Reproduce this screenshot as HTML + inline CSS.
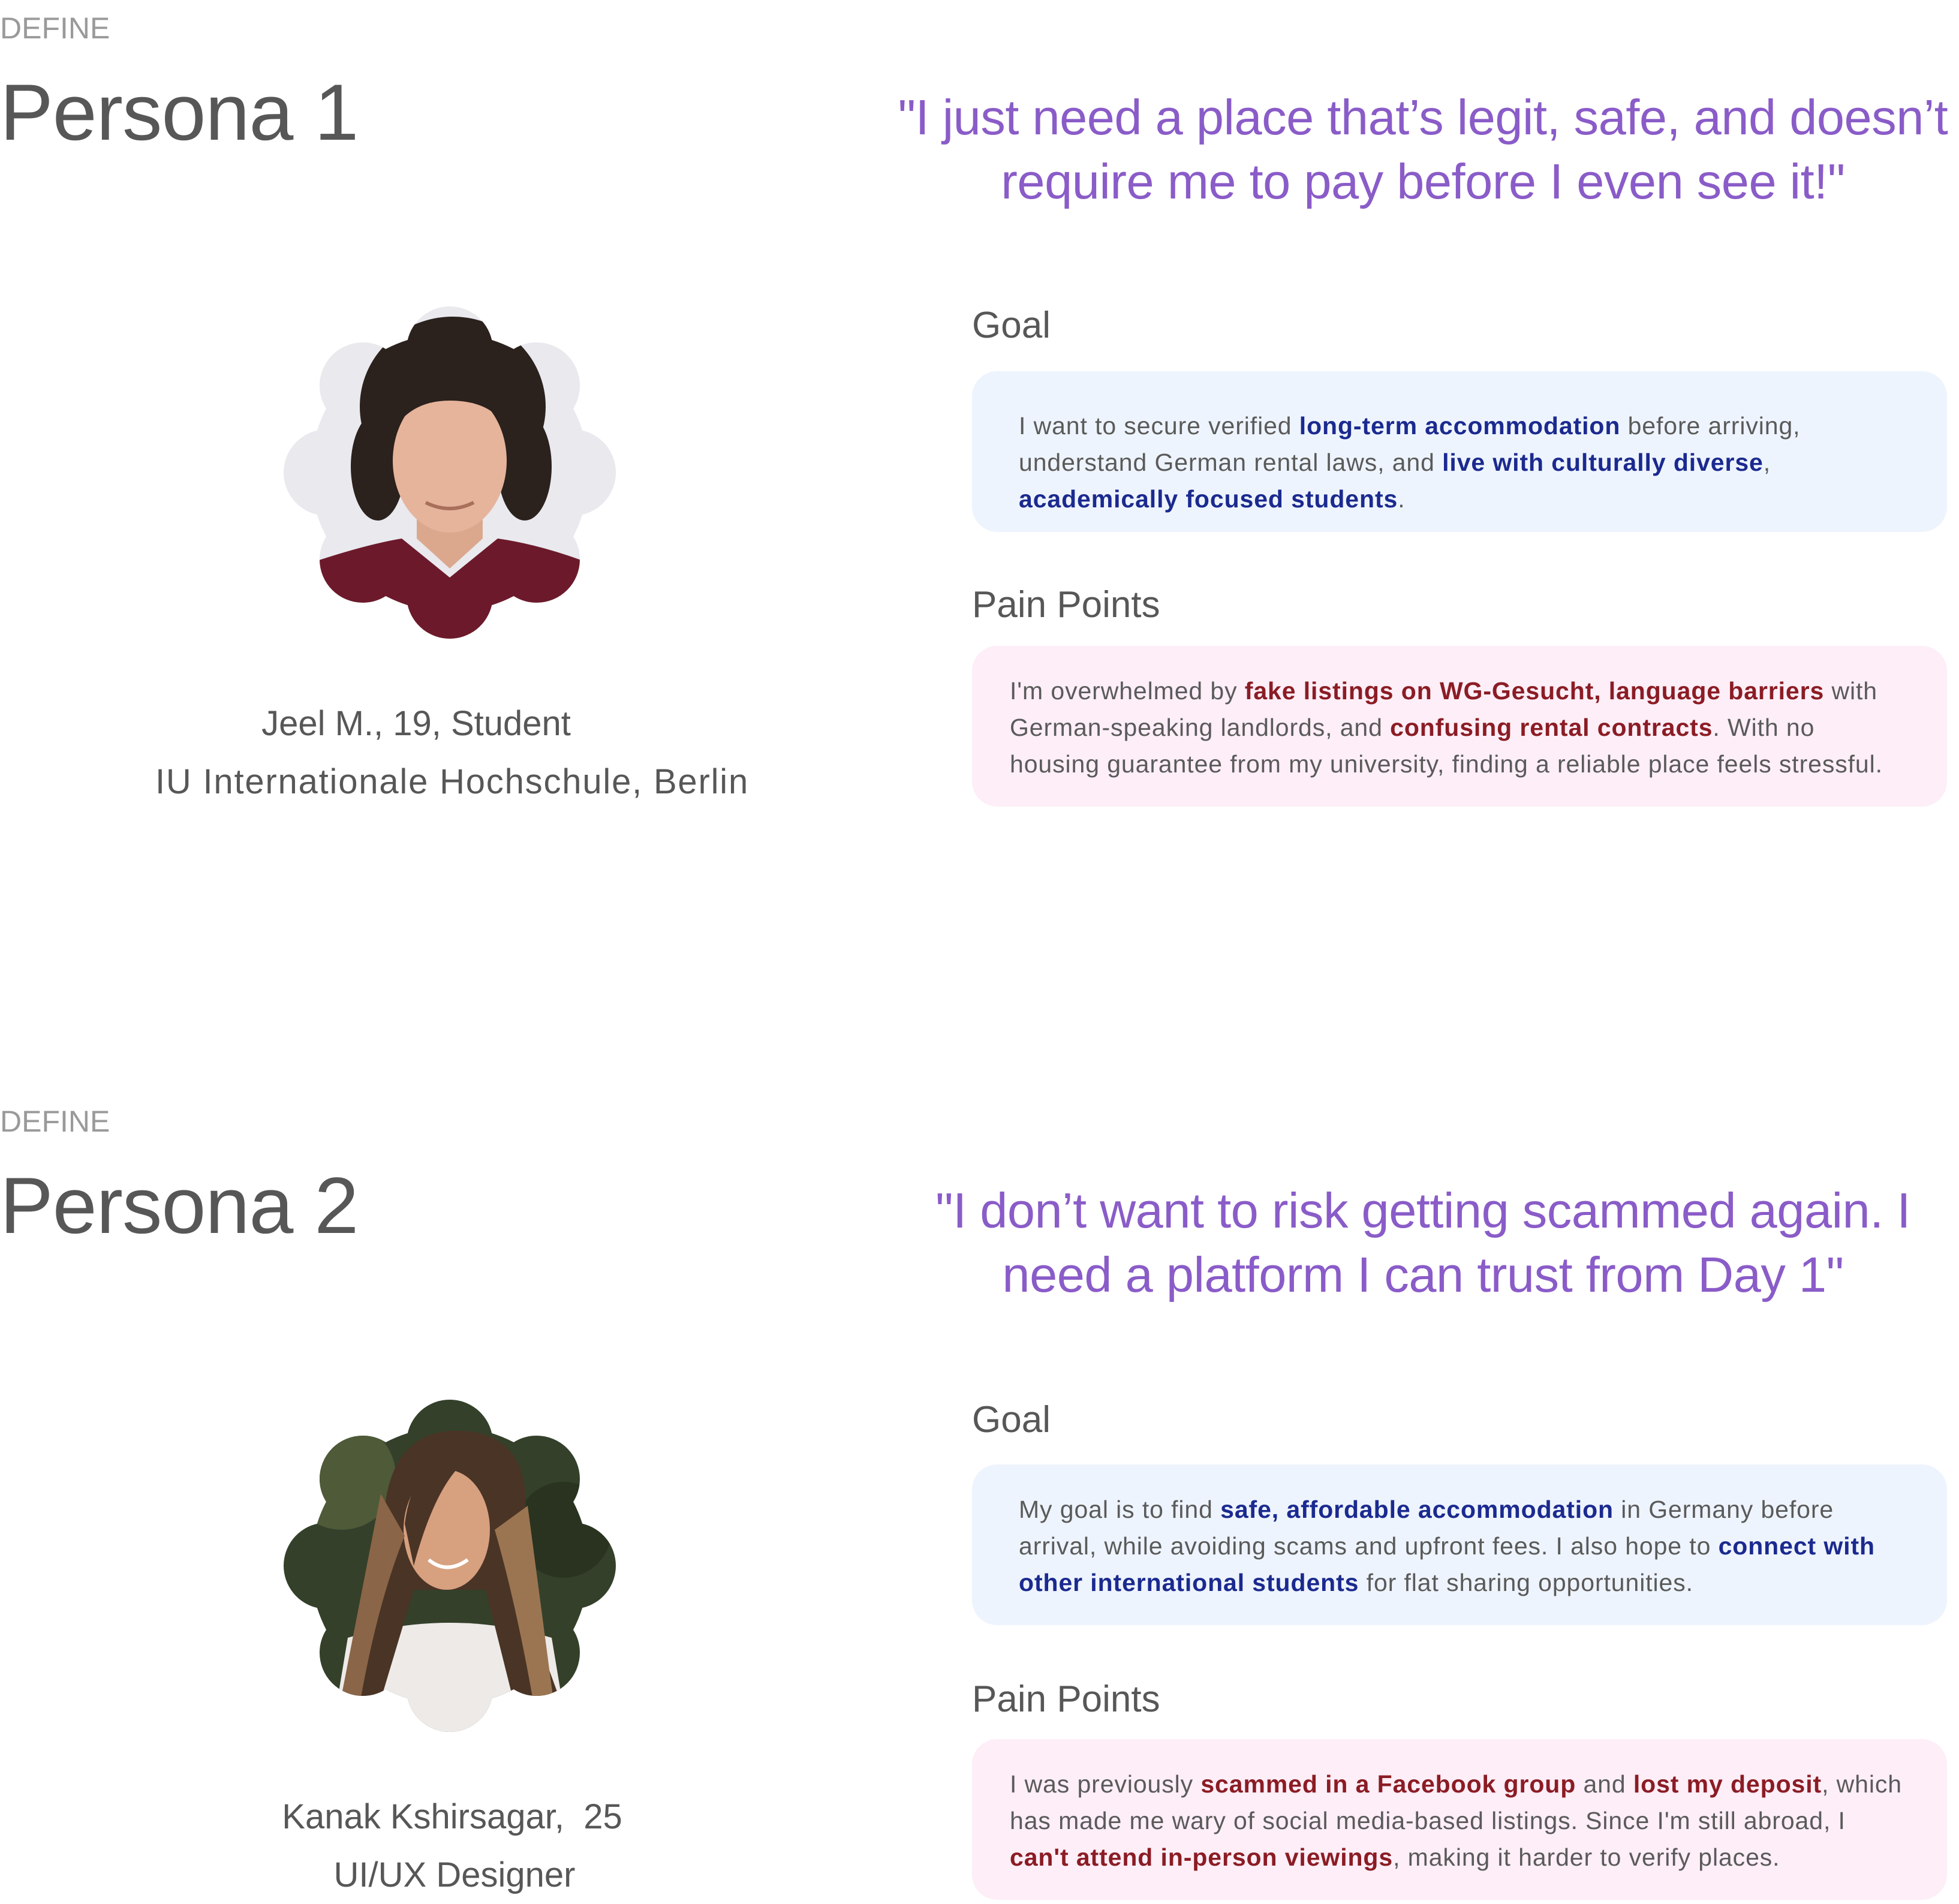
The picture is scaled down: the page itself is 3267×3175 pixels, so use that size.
<!DOCTYPE html>
<html><head><meta charset="utf-8"><style>
body{margin:0;width:3267px;height:3168px;background:#fff;position:relative;overflow:hidden;font-family:"Liberation Sans",sans-serif;color:#555}
.a{position:absolute;white-space:nowrap;line-height:1}
.def{font-size:50px;color:#9a9a9a}
.h1{font-size:133px;color:#575757;letter-spacing:-1px}
.q{font-size:83px;color:#8a5cc8;text-align:center;width:1800px;left:1473px;line-height:107px;letter-spacing:-0.5px}
.h2{font-size:62px;color:#575757}
.card{position:absolute;left:1621px;width:1626px;height:268px;border-radius:42px}
.txt{font-size:41px;line-height:61px;color:#5a5a5a;white-space:nowrap;letter-spacing:0.9px}
.b{color:#1b2a8f;font-weight:bold}
.r{color:#8b1c24;font-weight:bold}
.nm{font-size:58px;color:#575757;text-align:center;width:1300px;left:104px;line-height:97px}
</style></head><body>

<div class="a def" style="left:0;top:22px">DEFINE</div>
<div class="a h1" style="left:0;top:122px">Persona 1</div>
<div class="a q" style="top:142px">"I just need a place that’s legit, safe, and doesn’t<br>require me to pay before I even see it!"</div>

<svg style="position:absolute;left:450px;top:488px" width="600" height="600" viewBox="-300 -300 600 600">
<defs><clipPath id="c1"><circle r="232"/><circle cx="0" cy="-205" r="72"/><circle cx="145" cy="-145" r="72"/><circle cx="205" cy="0" r="72"/><circle cx="145" cy="145" r="72"/><circle cx="0" cy="205" r="72"/><circle cx="-145" cy="145" r="72"/><circle cx="-205" cy="0" r="72"/><circle cx="-145" cy="-145" r="72"/></clipPath></defs>
<g clip-path="url(#c1)">
<rect x="-300" y="-300" width="600" height="600" fill="#e9e9ee"/>
<path d="M-230 150 Q-140 120 -80 110 L0 175 L80 110 Q150 120 230 150 L230 300 L-230 300Z" fill="#6c1a2b"/>
<path d="M-55 40 L55 40 L55 110 L0 160 L-55 110Z" fill="#dba88e"/>
<ellipse cx="5" cy="-110" rx="155" ry="150" fill="#2b211d"/>
<ellipse cx="-120" cy="-10" rx="45" ry="90" fill="#2b211d"/>
<ellipse cx="125" cy="-10" rx="45" ry="90" fill="#2b211d"/>
<ellipse cx="0" cy="-20" rx="95" ry="120" fill="#e6b49b"/>
<path d="M-100 -60 Q-60 -190 40 -150 Q100 -140 100 -60 Q80 -120 0 -120 Q-70 -120 -100 -60Z" fill="#2b211d"/>
<path d="M-40 50 Q0 70 40 50" stroke="#a8705a" stroke-width="6" fill="none"/>
</g></svg>

<div class="a nm" style="top:1158px;left:44px">Jeel M., 19, Student</div>
<div class="a nm" style="top:1255px;letter-spacing:1.8px">IU Internationale Hochschule, Berlin</div>

<div class="a h2" style="left:1621px;top:512px">Goal</div>
<div class="card" style="top:619px;background:#eef4fd"></div>
<div class="a txt" style="left:1699px;top:680px">I want to secure verified <span class="b">long-term accommodation</span> before arriving,<br>understand German rental laws, and <span class="b">live with culturally diverse</span>,<br><span class="b">academically focused students</span>.</div>
<div class="a h2" style="left:1621px;top:978px">Pain Points</div>
<div class="card" style="top:1077px;background:#fdeef7"></div>
<div class="a txt" style="left:1684px;top:1122px">I'm overwhelmed by <span class="r">fake listings on WG-Gesucht, language barriers</span> with<br>German-speaking landlords, and <span class="r">confusing rental contracts</span>. With no<br>housing guarantee from my university, finding a reliable place feels stressful.</div>

<!-- Persona 2 -->
<div class="a def" style="left:0;top:1845px">DEFINE</div>
<div class="a h1" style="left:0;top:1945px">Persona 2</div>
<div class="a q" style="top:1965px">"I don’t want to risk getting scammed again. I<br>need a platform I can trust from Day 1"</div>

<svg style="position:absolute;left:450px;top:2311px" width="600" height="600" viewBox="-300 -300 600 600">
<defs><clipPath id="c2"><circle r="232"/><circle cx="0" cy="-205" r="72"/><circle cx="145" cy="-145" r="72"/><circle cx="205" cy="0" r="72"/><circle cx="145" cy="145" r="72"/><circle cx="0" cy="205" r="72"/><circle cx="-145" cy="145" r="72"/><circle cx="-205" cy="0" r="72"/><circle cx="-145" cy="-145" r="72"/></clipPath></defs>
<g clip-path="url(#c2)">
<rect x="-300" y="-300" width="600" height="600" fill="#34402a"/>
<circle cx="-180" cy="-150" r="90" fill="#4e5a38"/>
<circle cx="190" cy="-60" r="80" fill="#2a3320"/>
<path d="M-200 300 L-170 120 Q0 70 170 120 L200 300Z" fill="#eeeae8"/>
<path d="M-110 -80 Q-100 -230 20 -225 Q140 -220 125 -70 L150 130 L190 240 L110 240 L60 40 L-60 40 L-120 240 L-180 240 L-140 120Z" fill="#4a3426"/>
<ellipse cx="-5" cy="-60" rx="72" ry="100" fill="#d7a07f"/>
<path d="M-75 -70 Q-60 -190 40 -185 Q-20 -150 -60 0Z" fill="#4a3426"/>
<path d="M75 -60 Q110 60 140 230 L175 240 L130 -100Z" fill="#9b7552"/>
<path d="M-75 -50 Q-120 60 -150 230 L-185 240 L-115 -120Z" fill="#8a6548"/>
<path d="M-35 -10 Q-5 15 30 -10" stroke="#fff" stroke-width="6" fill="none"/>
</g></svg>

<div class="a nm" style="top:2981px;left:104px">Kanak Kshirsagar,&nbsp; 25</div>
<div class="a nm" style="top:3078px;left:108px">UI/UX Designer</div>

<div class="a h2" style="left:1621px;top:2337px">Goal</div>
<div class="card" style="top:2442px;background:#eef4fd"></div>
<div class="a txt" style="left:1699px;top:2487px">My goal is to find <span class="b">safe, affordable accommodation</span> in Germany before<br>arrival, while avoiding scams and upfront fees. I also hope to <span class="b">connect with</span><br><span class="b">other international students</span> for flat sharing opportunities.</div>
<div class="a h2" style="left:1621px;top:2803px">Pain Points</div>
<div class="card" style="top:2900px;background:#fdeef7"></div>
<div class="a txt" style="left:1684px;top:2945px">I was previously <span class="r">scammed in a Facebook group</span> and <span class="r">lost my deposit</span>, which<br>has made me wary of social media-based listings. Since I'm still abroad, I<br><span class="r">can't attend in-person viewings</span>, making it harder to verify places.</div>

</body></html>
